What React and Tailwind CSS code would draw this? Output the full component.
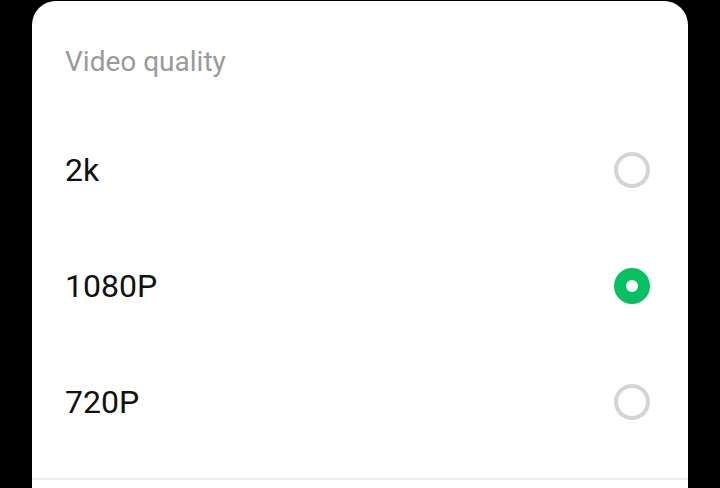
const OPTIONS = [
  { label: '2k', selected: false },
  { label: '1080P', selected: true },
  { label: '720P', selected: false },
]

function Radio({ selected }) {
  if (selected) {
    return (
      <span className="flex size-[36px] items-center justify-center rounded-full bg-[#07c160]">
        <span className="size-[12px] rounded-full bg-white" />
      </span>
    )
  }
  return <span className="size-[36px] rounded-full border-[4px] border-[#d4d4d4]" />
}

export default function App() {
  return (
    <div className="h-[488px] w-[720px] overflow-hidden bg-black px-8 pt-px" style={{ fontFamily: 'Roboto, "Noto Sans", sans-serif' }}>
      <div className="h-[600px] rounded-t-[24px] bg-white pt-[41px]">
        <div className="mb-[30px] pl-[33px] text-[28px] leading-[40px] text-[#9a9a9a]">Video quality</div>
        {OPTIONS.map((option) => (
          <div key={option.label} className="flex h-[116px] items-center justify-between pl-[33px] pr-[38px]">
            <span className="text-[32px] text-[#111]">{option.label}</span>
            <Radio selected={option.selected} />
          </div>
        ))}
        <div className="mt-[18px] h-[2px] bg-[#f0f0f0]" />
      </div>
    </div>
  )
}
